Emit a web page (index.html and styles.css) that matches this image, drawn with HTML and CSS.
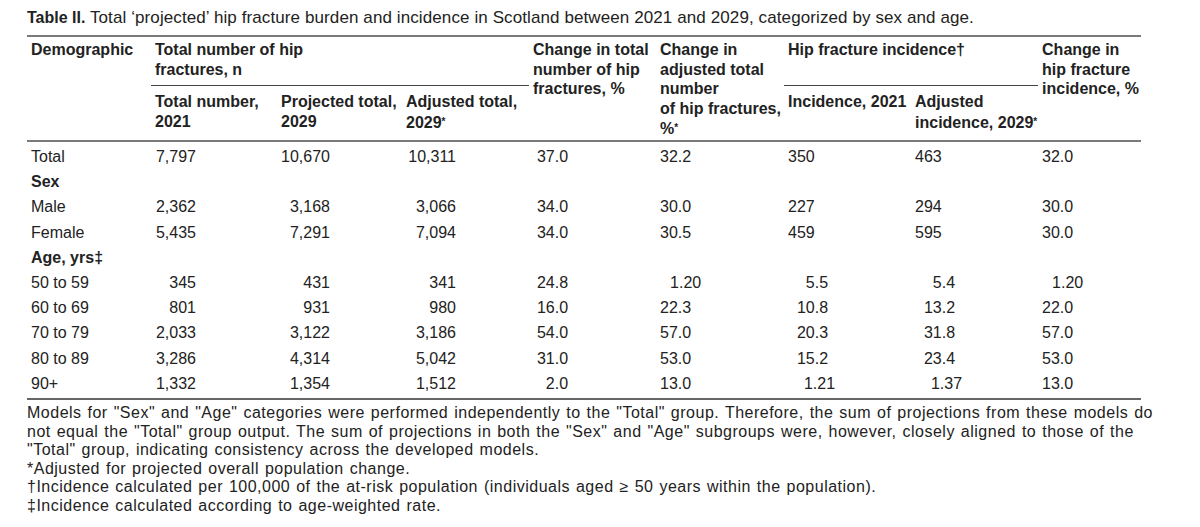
FILE: index.html
```html
<!DOCTYPE html>
<html lang="en">
<head>
<meta charset="utf-8">
<title>Table II</title>
<link rel="stylesheet" href="styles.css">
</head>
<body>
<div class="page">
  <p class="caption"><b>Table II.</b> Total ‘projected’ hip fracture burden and incidence in Scotland between 2021 and 2029, categorized by sex and age.</p>
  <table class="data">
    <colgroup>
      <col class="c0"><col class="c1"><col class="c2"><col class="c3"><col class="c4"><col class="c5"><col class="c6"><col class="c7"><col class="c8">
    </colgroup>
    <thead>
      <tr class="h1">
        <th rowspan="2">Demographic</th>
        <th colspan="3" class="group">Total number of hip<br>fractures, n</th>
        <th rowspan="2">Change in total<br>number of hip<br>fractures, %</th>
        <th rowspan="2">Change in<br>adjusted total<br>number<br>of hip fractures,<br>%<span class="ast">*</span></th>
        <th colspan="2" class="group">Hip fracture incidence†</th>
        <th rowspan="2">Change in<br>hip fracture<br>incidence, %</th>
      </tr>
      <tr class="h2">
        <th>Total number,<br>2021</th>
        <th>Projected total,<br>2029</th>
        <th>Adjusted total,<br>2029<span class="ast">*</span></th>
        <th>Incidence, 2021</th>
        <th>Adjusted<br>incidence, 2029<span class="ast">*</span></th>
      </tr>
    </thead>
    <tbody>
      <tr class="first">
        <td>Total</td>
        <td><span class="n n1">7,797</span></td><td><span class="n n2">10,670</span></td><td><span class="n n3">10,311</span></td><td><span class="n n4">37.0</span></td>
        <td>32.2</td><td>350</td><td>463</td><td>32.0</td>
      </tr>
      <tr class="sub"><td colspan="9">Sex</td></tr>
      <tr>
        <td>Male</td>
        <td><span class="n n1">2,362</span></td><td><span class="n n2">3,168</span></td><td><span class="n n3">3,066</span></td><td><span class="n n4">34.0</span></td>
        <td>30.0</td><td>227</td><td>294</td><td>30.0</td>
      </tr>
      <tr>
        <td>Female</td>
        <td><span class="n n1">5,435</span></td><td><span class="n n2">7,291</span></td><td><span class="n n3">7,094</span></td><td><span class="n n4">34.0</span></td>
        <td>30.5</td><td>459</td><td>595</td><td>30.0</td>
      </tr>
      <tr class="sub"><td colspan="9">Age, yrs‡</td></tr>
      <tr>
        <td>50 to 59</td>
        <td><span class="n n1">345</span></td><td><span class="n n2">431</span></td><td><span class="n n3">341</span></td><td><span class="n n4">24.8</span></td>
        <td><span class="shift">1.20</span></td><td><span class="n n6">5.5</span></td><td><span class="n n7">5.4</span></td><td><span class="shift">1.20</span></td>
      </tr>
      <tr>
        <td>60 to 69</td>
        <td><span class="n n1">801</span></td><td><span class="n n2">931</span></td><td><span class="n n3">980</span></td><td><span class="n n4">16.0</span></td>
        <td>22.3</td><td><span class="n n6">10.8</span></td><td><span class="n n7">13.2</span></td><td>22.0</td>
      </tr>
      <tr>
        <td>70 to 79</td>
        <td><span class="n n1">2,033</span></td><td><span class="n n2">3,122</span></td><td><span class="n n3">3,186</span></td><td><span class="n n4">54.0</span></td>
        <td>57.0</td><td><span class="n n6">20.3</span></td><td><span class="n n7">31.8</span></td><td>57.0</td>
      </tr>
      <tr>
        <td>80 to 89</td>
        <td><span class="n n1">3,286</span></td><td><span class="n n2">4,314</span></td><td><span class="n n3">5,042</span></td><td><span class="n n4">31.0</span></td>
        <td>53.0</td><td><span class="n n6">15.2</span></td><td><span class="n n7">23.4</span></td><td>53.0</td>
      </tr>
      <tr class="last">
        <td>90+</td>
        <td><span class="n n1">1,332</span></td><td><span class="n n2">1,354</span></td><td><span class="n n3">1,512</span></td><td><span class="n n4">2.0</span></td>
        <td>13.0</td><td><span class="n n6 wide">1.21</span></td><td><span class="n n7 wide">1.37</span></td><td>13.0</td>
      </tr>
    </tbody>
  </table>
  <div class="notes">
    <p>Models for "Sex" and "Age" categories were performed independently to the "Total" group. Therefore, the sum of projections from these models do<br>not equal the "Total" group output. The sum of projections in both the "Sex" and "Age" subgroups were, however, closely aligned to those of the<br>"Total" group, indicating consistency across the developed models.</p>
    <p>*Adjusted for projected overall population change.</p>
    <p>†Incidence calculated per 100,000 of the at-risk population (individuals aged ≥ 50 years within the population).</p>
    <p>‡Incidence calculated according to age-weighted rate.</p>
  </div>
</div>
</body>
</html>
```

FILE: styles.css
```css
html, body {
  margin: 0;
  padding: 0;
  background: #ffffff;
}

.page {
  padding: 8px 0 0 27px;
  width: 1160px;
  font-family: "Liberation Sans", Arial, sans-serif;
  color: #222222;
}

.caption {
  margin: 0;
  font-size: 17px;
  line-height: 20px;
  letter-spacing: 0.1px;
  width: 1114px;
  padding-bottom: 7px;
  border-bottom: 2px solid #7a7a7a;
  white-space: nowrap;
}

.caption b {
  font-size: 16px;
  font-weight: bold;
  letter-spacing: 0;
}

.data {
  width: 1114px;
  border-collapse: collapse;
  table-layout: fixed;
  font-size: 16px;
}

.c0 { width: 124px; }
.c1 { width: 126px; }
.c2 { width: 125px; }
.c3 { width: 127px; }
.c4 { width: 127px; }
.c5 { width: 128px; }
.c6 { width: 127px; }
.c7 { width: 127px; }
.c8 { width: 103px; }

.data th {
  text-align: left;
  vertical-align: top;
  font-weight: bold;
  line-height: 19.5px;
  padding: 0 0 0 4px;
  white-space: nowrap;
}

.h1 th {
  padding-top: 3px;
  height: 45px;
}

.h1 th.group {
  border-bottom: 1px solid #444444;
}

.h2 th {
  padding-top: 6px;
  padding-bottom: 8px;
}

.data thead {
  border-bottom: 2px solid #7a7a7a;
}

.ast {
  font-size: 10px;
  vertical-align: 3px;
}

.data td {
  line-height: 20.2px;
  padding: 3px 0 2px 4px;
  white-space: nowrap;
}

.data tr.first td {
  padding-top: 5px;
}

.data tr.last td {
  padding-bottom: 4px;
}

.sub td {
  font-weight: bold;
}

.n {
  display: inline-block;
  text-align: right;
}

.n1 { width: 41px; }
.n2 { width: 49px; }
.n3 { width: 50px; }
.n4 { width: 35px; }
.n6 { width: 40px; }
.n7 { width: 40px; }
.n6.wide, .n7.wide { width: 47px; }

.shift {
  padding-left: 10px;
}

.data tbody {
  border-bottom: 2px solid #666666;
}

.notes {
  padding-top: 4px;
  font-size: 16px;
  line-height: 18.6px;
  letter-spacing: 0.5px;
  word-spacing: 1px;
  white-space: nowrap;
}

.notes p {
  margin: 0;
}
```
